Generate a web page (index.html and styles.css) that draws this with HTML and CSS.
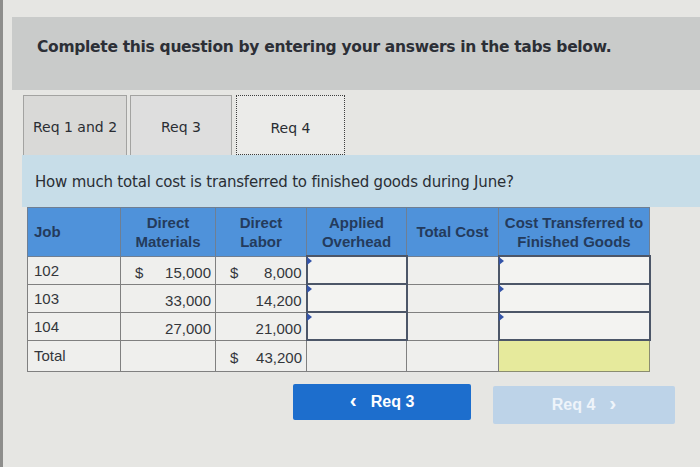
FILE: index.html
```html
<!DOCTYPE html>
<html>
<head>
<meta charset="utf-8">
<link rel="stylesheet" href="styles.css">
</head>
<body>
<div class="page">
  <div class="banner">Complete this question by entering your answers in the tabs below.</div>
  <div class="tabs">
    <div class="tab t1">Req 1 and 2</div>
    <div class="tab t2">Req 3</div>
    <div class="tab t3 active">Req 4</div>
  </div>
  <div class="question">How much total cost is transferred to finished goods during June?</div>
  <table class="grid">
    <colgroup>
      <col class="c1"><col class="c2"><col class="c3"><col class="c4"><col class="c5"><col class="c6">
    </colgroup>
    <thead>
      <tr>
        <th class="left">Job</th>
        <th>Direct<br>Materials</th>
        <th>Direct<br>Labor</th>
        <th>Applied<br>Overhead</th>
        <th>Total Cost</th>
        <th>Cost Transferred to<br>Finished Goods</th>
      </tr>
    </thead>
    <tbody>
      <tr>
        <td>102</td>
        <td class="num"><span class="cur">$</span>15,000</td>
        <td class="num"><span class="cur">$</span>8,000</td>
        <td class="inp"></td>
        <td></td>
        <td class="inp"></td>
      </tr>
      <tr>
        <td>103</td>
        <td class="num">33,000</td>
        <td class="num">14,200</td>
        <td class="inp"></td>
        <td></td>
        <td class="inp"></td>
      </tr>
      <tr>
        <td>104</td>
        <td class="num">27,000</td>
        <td class="num">21,000</td>
        <td class="inp"></td>
        <td></td>
        <td class="inp"></td>
      </tr>
      <tr class="total">
        <td>Total</td>
        <td></td>
        <td class="num"><span class="cur">$</span>43,200</td>
        <td></td>
        <td></td>
        <td class="yellow"></td>
      </tr>
    </tbody>
  </table>
  <div class="nav">
    <div class="btn prev"><span class="chev">&#8249;</span>Req 3</div>
    <div class="btn next">Req 4<span class="chev">&#8250;</span></div>
  </div>
</div>
</body>
</html>
```
FILE: styles.css
```css
html, body {
  margin: 0;
  padding: 0;
}
body {
  width: 700px;
  height: 467px;
  overflow: hidden;
  background: #e6e6e3;
  font-family: "Liberation Sans", Arial, sans-serif;
}
.page {
  border-left: 3px solid #8e8e8c;
  height: 467px;
  box-sizing: border-box;
  padding-top: 17px;
}
.banner {
  margin-left: 9px;
  height: 73px;
  box-sizing: border-box;
  padding: 21px 0 0 25px;
  background: #c9cbca;
  font-family: "DejaVu Sans", Verdana, sans-serif;
  font-weight: bold;
  font-size: 15.5px;
  letter-spacing: -0.3px;
  color: #2c2f36;
}
.tabs {
  display: flex;
  margin-left: 20px;
  margin-top: 5px;
  height: 60px;
  gap: 3px;
}
.tab {
  box-sizing: border-box;
  height: 60px;
  display: flex;
  align-items: center;
  justify-content: center;
  font-family: "DejaVu Sans", Verdana, sans-serif;
  font-size: 14px;
  color: #2a2d33;
  background: #d9d9d7;
  border: 1px solid #a3a3a1;
  border-bottom: none;
}
.t1 { width: 104px; padding-top: 2px; }
.t2 { width: 102px; background: #dedede; padding-top: 2px; }
.t3 {
  width: 109px;
  margin-left: 1px;
  background: #ebebe9;
  border: 1px dotted #3d3d3d;
  padding-top: 6px;
}
.question {
  margin-left: 19px;
  height: 52px;
  box-sizing: border-box;
  padding: 18px 0 0 13px;
  background: #c7dde8;
  font-family: "DejaVu Sans", Verdana, sans-serif;
  font-size: 15px;
  letter-spacing: -0.2px;
  color: #2a2e34;
}
.grid {
  margin-left: 24px;
  border-collapse: collapse;
  table-layout: fixed;
  width: 622px;
  font-size: 15px;
  color: #33363b;
}
.c1 { width: 93px; }
.c2 { width: 95px; }
.c3 { width: 91px; }
.c4 { width: 100px; }
.c5 { width: 92px; }
.c6 { width: 151px; }
.grid th {
  background: #4f92da;
  color: #243b5c;
  font-weight: bold;
  height: 47px;
  padding: 0 2px;
  line-height: 19px;
  border: 1px solid #6f7f93;
  text-align: center;
}
.grid th.left {
  text-align: left;
  padding-left: 6px;
}
.grid td {
  background: #efefed;
  border: 1px solid #808080;
  height: 28px;
  padding: 0 6px;
  box-sizing: border-box;
}
.grid tr.total td {
  height: 31px;
}
.grid td.num {
  text-align: right;
  padding-right: 4px;
  padding-top: 4px;
}
.cur {
  float: left;
  margin-left: 8px;
}
.grid td.inp {
  position: relative;
  border: 2px solid #4c5668;
  background: #f3f3f1;
}
.grid td.inp::before {
  content: "";
  position: absolute;
  left: -1px;
  top: 0;
  border-left: 5px solid #3454a8;
  border-top: 4px solid transparent;
  border-bottom: 4px solid transparent;
}
.grid td.yellow {
  background: #e6ea9c;
  border: 1px solid #8a8c70;
}
.nav {
  display: flex;
  margin-top: 12px;
  margin-left: 290px;
  gap: 22px;
}
.btn {
  display: flex;
  align-items: center;
  justify-content: center;
  font-weight: bold;
  font-size: 16px;
  border-radius: 2px;
}
.prev {
  width: 178px;
  height: 36px;
  background: #1d6ecd;
  color: #ffffff;
}
.prev .chev {
  margin-right: 14px;
  font-size: 21px;
  margin-top: -3px;
}
.next {
  width: 182px;
  height: 38px;
  margin-top: 2px;
  background: #bdd3e8;
  color: #eef4fa;
}
.next .chev {
  margin-left: 14px;
  font-size: 21px;
  margin-top: -3px;
}
```
